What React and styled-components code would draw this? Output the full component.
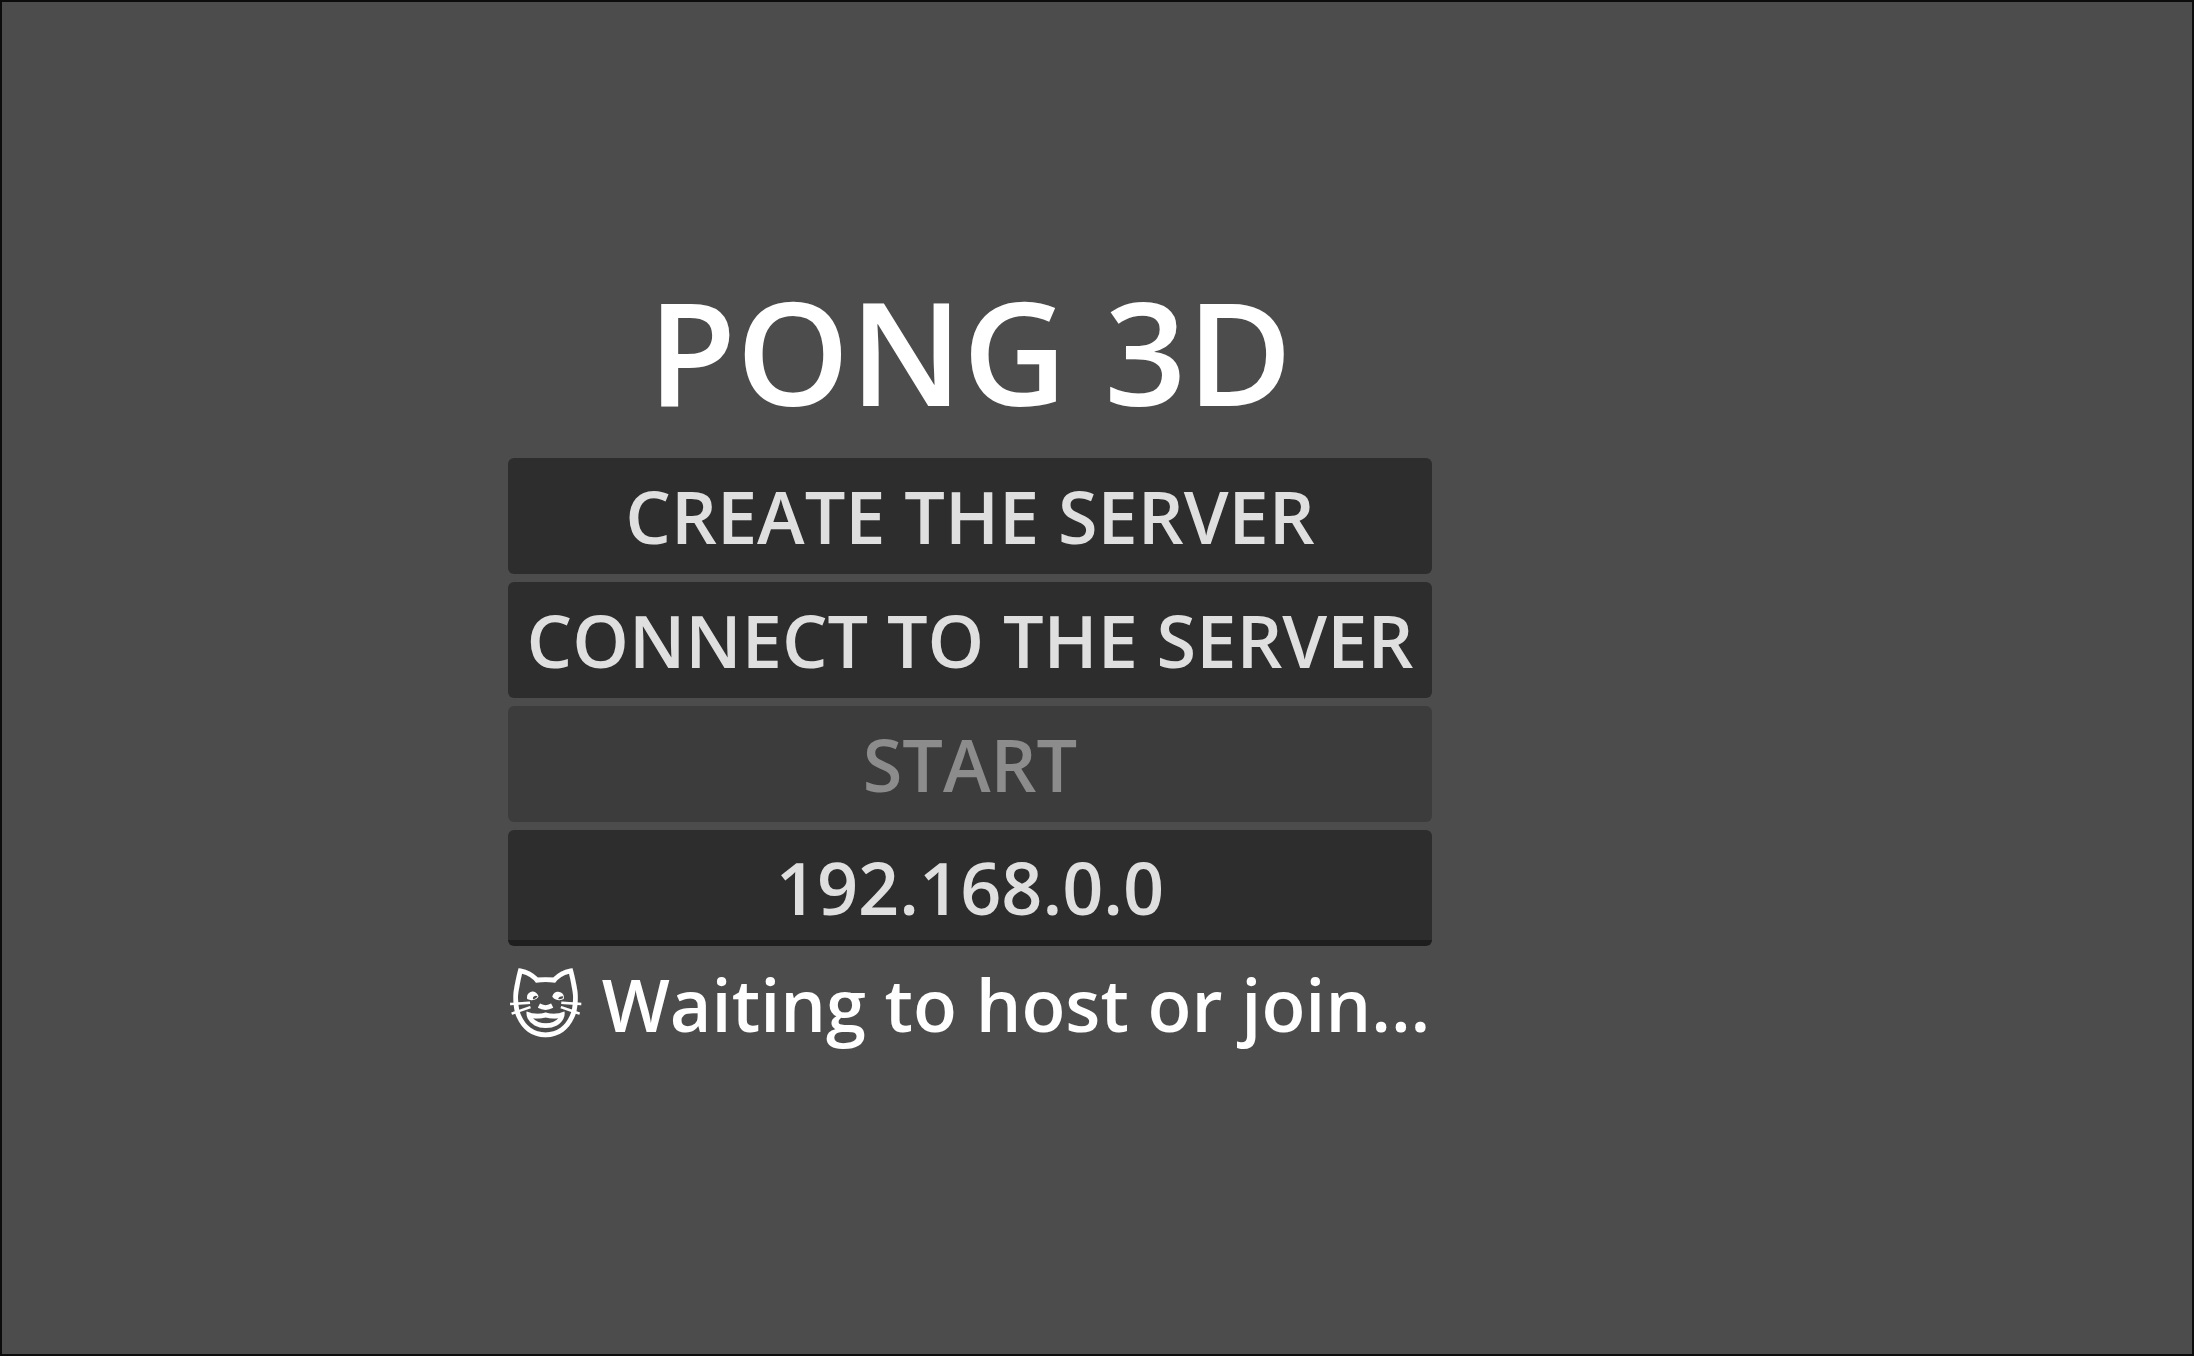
import React, { useState } from "react";
import styled, { createGlobalStyle } from "styled-components";

const GlobalStyle = createGlobalStyle`
  *, *::before, *::after {
    box-sizing: border-box;
  }

  body {
    margin: 0;
    background: #4c4c4c;
    font-family: "Open Sans", sans-serif;
    font-weight: 600;
  }
`;

const Screen = styled.main`
  min-height: 100vh;
  display: flex;
  align-items: flex-start;
  padding: 250px 48px 48px 506px;
  border: 2px solid #0c0c0c;
  background: #4c4c4c;
`;

const Menu = styled.form`
  display: flex;
  flex-direction: column;
  gap: 8px;
  min-width: 924px;
`;

const Title = styled.h1`
  margin: 0;
  padding-bottom: 2px;
  color: #ffffff;
  font-size: 144px;
  font-weight: 600;
  line-height: 196px;
  text-align: center;
`;

const MenuButton = styled.button`
  height: 116px;
  padding: 0 16px;
  border: 0;
  border-radius: 6px;
  background: #2d2d2d;
  color: #dfdfdf;
  font: inherit;
  font-size: 72px;
  line-height: 100px;
  white-space: nowrap;

  &:disabled {
    background: #3c3c3c;
    color: #8c8c8c;
  }
`;

const AddressInput = styled.input`
  width: 0;
  min-width: 100%;
  height: 116px;
  padding: 4px 16px 0;
  border: 0;
  border-bottom: 6px solid #1e1e1e;
  border-radius: 6px;
  outline: none;
  background: #2d2d2d;
  color: #dfdfdf;
  font: inherit;
  font-size: 72px;
  text-align: center;
`;

const Status = styled.p`
  margin: 0;
  color: #ffffff;
  font-size: 72px;
  line-height: 100px;
  white-space: nowrap;
`;

const Cat = styled.span`
  font-family: "DejaVu Sans", sans-serif;
  font-weight: 400;
`;

export default function App() {
  const [address, setAddress] = useState("192.168.0.0");

  return (
    <>
      <GlobalStyle />
      <Screen>
        <Menu onSubmit={(event) => event.preventDefault()}>
          <Title>PONG 3D</Title>
          <MenuButton type="button">CREATE THE SERVER</MenuButton>
          <MenuButton type="button">CONNECT TO THE SERVER</MenuButton>
          <MenuButton type="submit" disabled>START</MenuButton>
          <AddressInput
            aria-label="Server address"
            value={address}
            onChange={(event) => setAddress(event.target.value)}
          />
          <Status role="status">
            <Cat>😺</Cat> Waiting to host or join...
          </Status>
        </Menu>
      </Screen>
    </>
  );
}
